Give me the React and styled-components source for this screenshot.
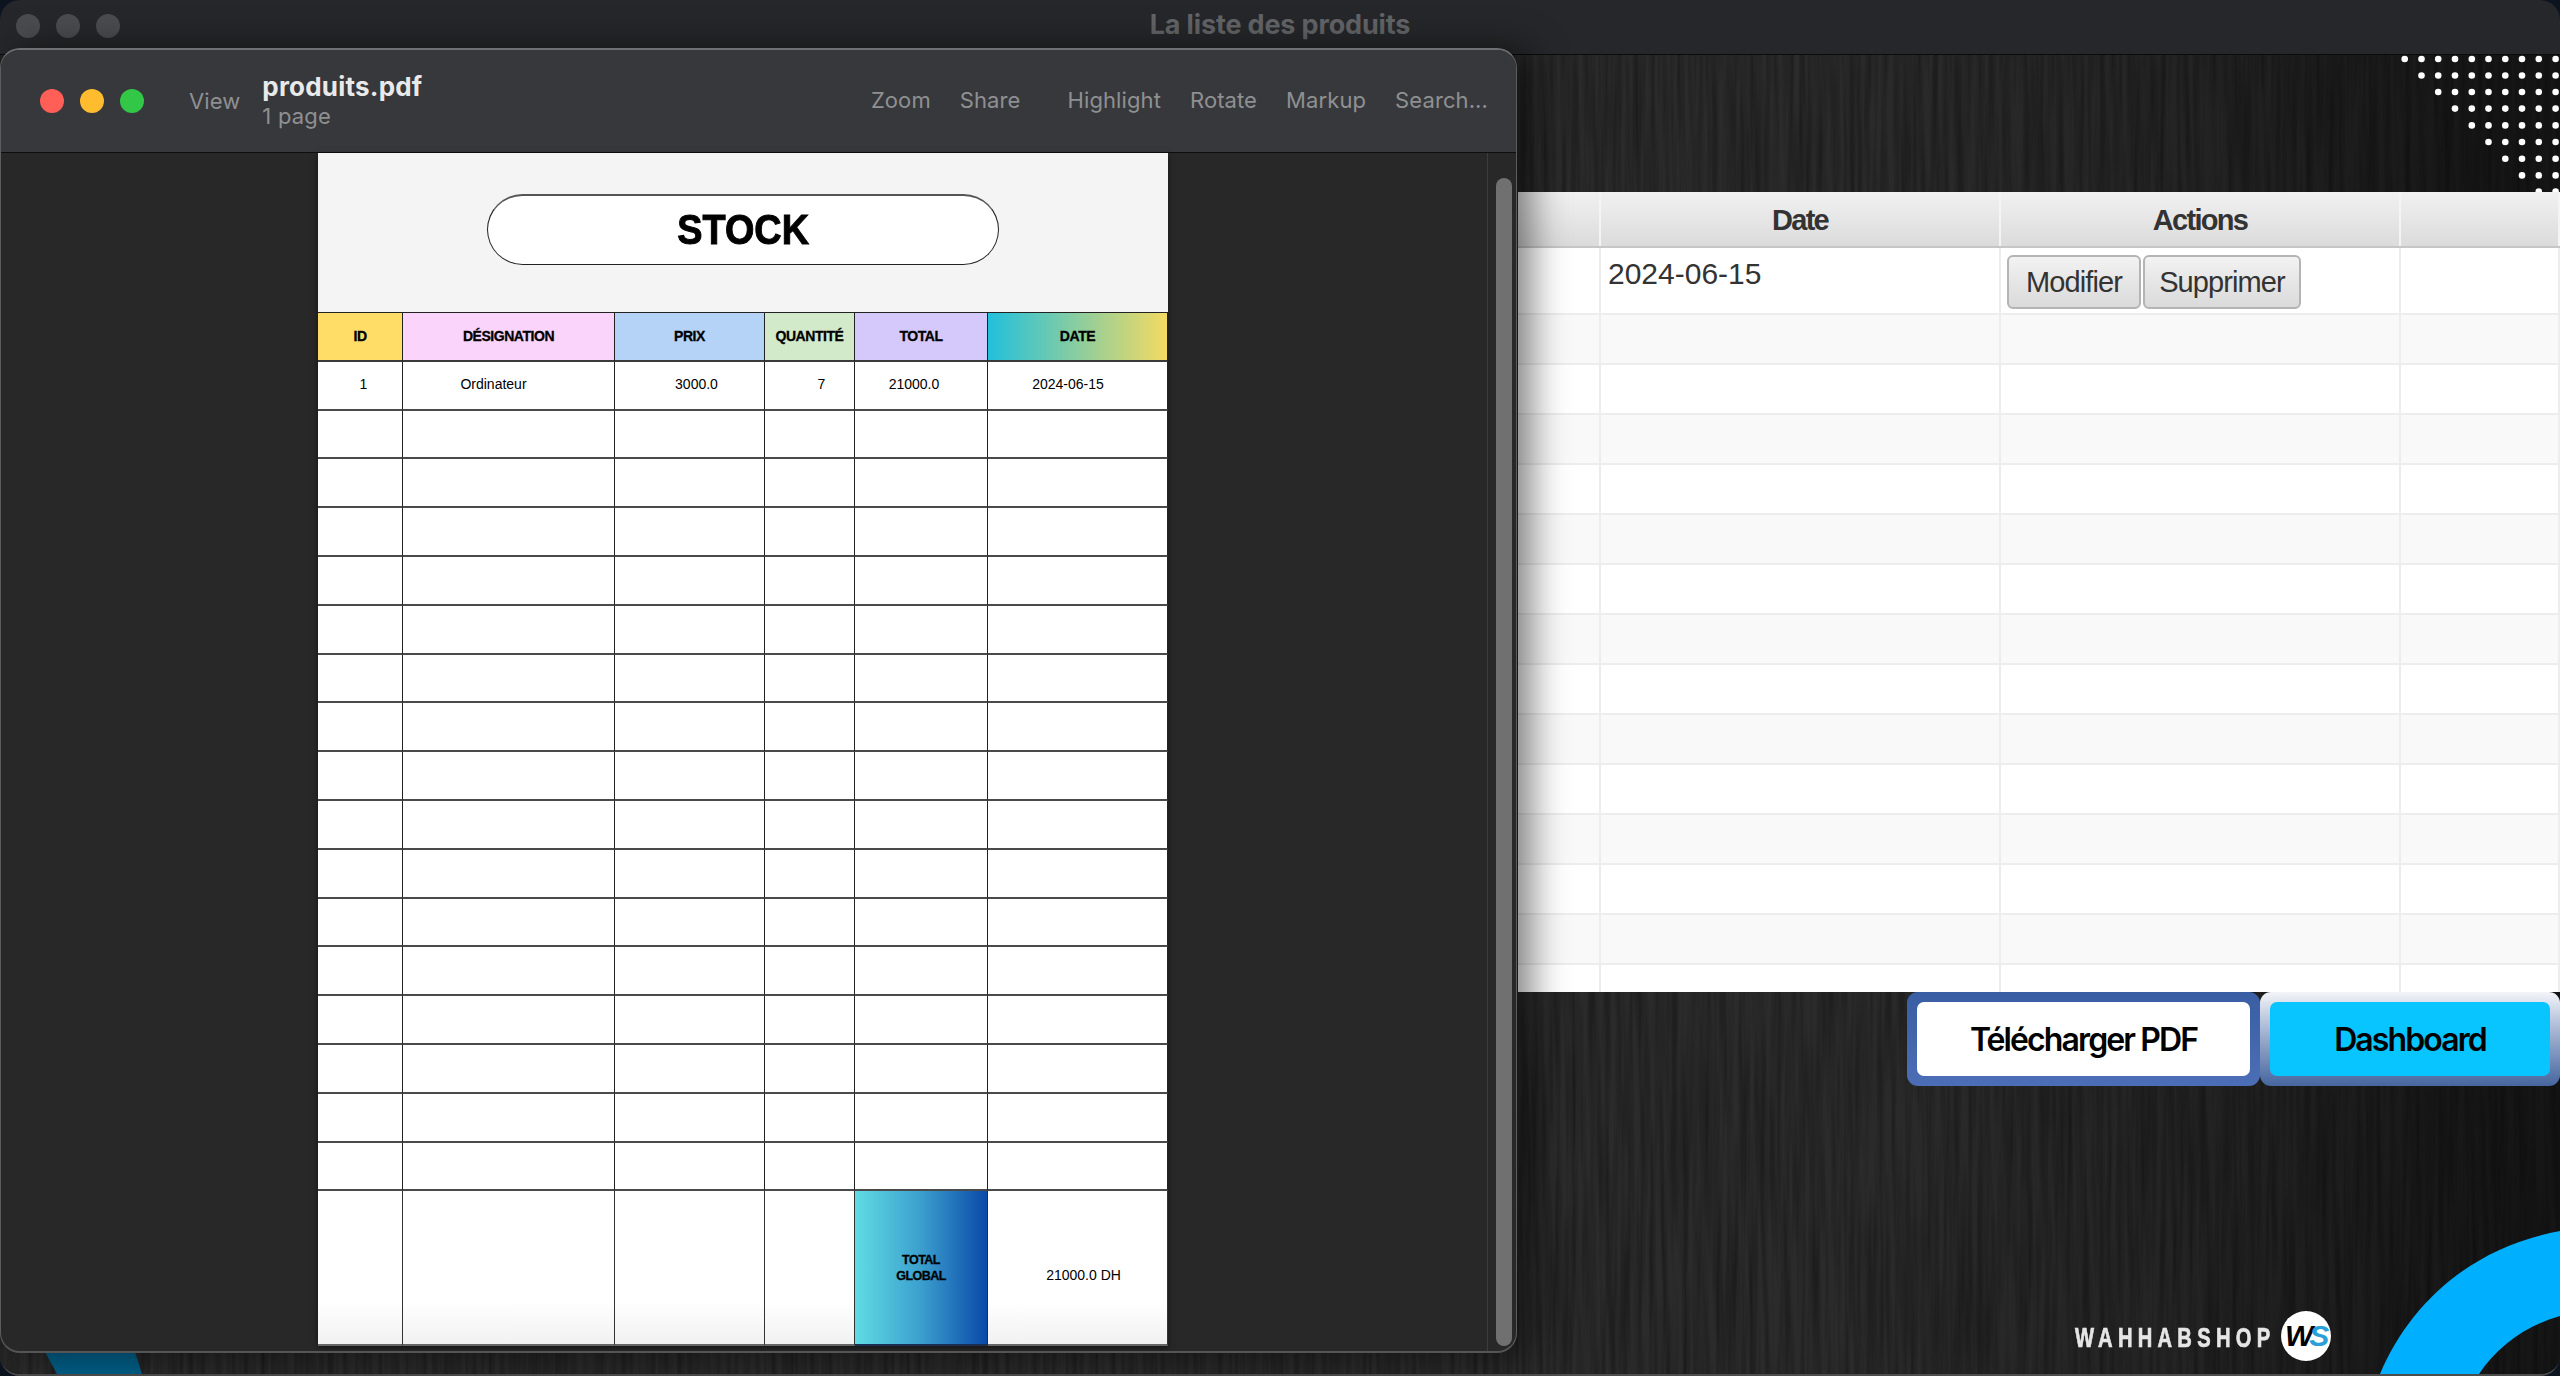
import React from "react";
import styled, { createGlobalStyle } from "styled-components";

const UI_FONT = '"Inter", "Liberation Sans", sans-serif';
const PDF_FONT = '"Liberation Sans", Arial, sans-serif';

const GlobalStyle = createGlobalStyle`
  html, body {
    margin: 0;
    padding: 0;
    background: #0c1420;
    font-family: ${UI_FONT};
  }
  * { box-sizing: border-box; }
`;

const Desktop = styled.div`
  position: relative;
  width: 2560px;
  height: 1376px;
  overflow: hidden;
`;

const BackWindow = styled.div`
  display: flex;
  flex-direction: column;
  width: 100%;
  height: 100%;
  border-radius: 20px;
  overflow: hidden;
  border-bottom: 2px solid #4d4d4d;
`;

const TitleBar = styled.header`
  position: relative;
  flex: 0 0 55px;
  display: flex;
  align-items: center;
  justify-content: center;
  padding-bottom: 6px;
  background: #26272a;
  border-bottom: 1px solid #0b0b0b;
`;

const GhostLights = styled.div`
  position: absolute;
  left: 16px;
  top: 14px;
  display: flex;
  gap: 16px;
`;

const GhostDot = styled.span`
  width: 24px;
  height: 24px;
  border-radius: 50%;
  background: #4b4c4f;
`;

const WindowTitle = styled.h1`
  margin: 0;
  font-size: 27px;
  font-weight: 700;
  letter-spacing: -0.15px;
  color: #636467;
`;

const Wood = styled.main`
  position: relative;
  flex: 1;
  min-height: 0;
  display: flex;
  flex-direction: column;
  padding: 137px 0 0 1518px;
  background: linear-gradient(90deg, #2b2b2b 0%, #2b2b2b 72%, #252525 84%, #161616 98%);
`;

const Grain = styled.svg`
  position: absolute;
  inset: 0;
  width: 100%;
  height: 100%;
`;

const Dots = styled.svg`
  position: absolute;
  top: 0;
  right: 0;
  width: 160px;
  height: 138px;
`;

const Arc = styled.svg`
  position: absolute;
  right: 0;
  bottom: 0;
  width: 182px;
  height: 143px;
`;

const Sliver = styled.svg`
  position: absolute;
  left: 40px;
  bottom: 0;
  width: 110px;
  height: 22px;
`;

const ProductTable = styled.section`
  position: relative;
  height: 800px;
  overflow: hidden;
  background: #fff;
  font-family: ${PDF_FONT};
`;

const TableHead = styled.div`
  display: grid;
  grid-template-columns: 83px 400px 400px 159px;
  height: 56px;
  background: linear-gradient(#f1f1f1, #dbdbdb);
  border-bottom: 2px solid #c6c6c6;
`;

const HeadCell = styled.div`
  display: flex;
  align-items: center;
  justify-content: center;
  padding-top: 2px;
  font-size: 29px;
  font-weight: 700;
  letter-spacing: -1.7px;
  color: #333;
  border-right: 2px solid #f4f4f4;
`;

const TableRow = styled.div`
  display: grid;
  grid-template-columns: 83px 400px 400px 159px;
  height: ${(p) => p.$height}px;
  background: ${(p) => (p.$striped ? "#f9f9f9" : "#fff")};
  border-bottom: 2px solid #ededed;
`;

const BodyCell = styled.div`
  display: flex;
  align-items: flex-start;
  gap: 2px;
  padding: ${(p) => (p.$actions ? "7px 0 0 6px" : "8px 0 0 7px")};
  font-size: 30px;
  line-height: 36px;
  color: #333;
  border-right: 2px solid #ededed;
`;

const RowButton = styled.button`
  height: 54px;
  width: ${(p) => p.$width}px;
  padding: 0;
  font-family: ${PDF_FONT};
  font-size: 29px;
  letter-spacing: -0.9px;
  color: #333;
  background: linear-gradient(#f2f2f2, #dadada);
  border: 2px solid #b4b4b4;
  border-radius: 6px;
`;

const ActionBar = styled.div`
  position: relative;
  display: flex;
  justify-content: flex-end;
`;

const BigButton = styled.button`
  height: 94px;
  width: ${(p) => p.$width}px;
  padding: 10px;
  border: 0;
  border-radius: 11px;
  background: linear-gradient(${(p) => p.$edge});
`;

const ButtonFace = styled.span`
  display: flex;
  align-items: center;
  justify-content: center;
  height: 100%;
  border-radius: 7px;
  font-family: ${UI_FONT};
  font-size: 32px;
  font-weight: 600;
  letter-spacing: -1.9px;
  color: #000;
  background: ${(p) => p.$fill};
`;

const Brand = styled.div`
  position: relative;
  display: flex;
  align-items: center;
  justify-content: flex-end;
  gap: 6px;
  margin-top: auto;
  padding: 0 229px 13px 0;
`;

const BrandName = styled.span`
  display: inline-block;
  padding-top: 4px;
  font-family: ${PDF_FONT};
  font-size: 28px;
  font-weight: 700;
  letter-spacing: 7.3px;
  color: #e6e6e6;
  transform: scaleX(0.72);
  transform-origin: right center;
  -webkit-text-stroke: 0.7px #e6e6e6;
`;

const BrandMark = styled.svg`
  width: 50px;
  height: 50px;
`;

const PdfWindow = styled.div`
  position: absolute;
  left: 0;
  top: 48px;
  width: 1517px;
  height: 1305px;
  display: flex;
  flex-direction: column;
  border-radius: 20px;
  overflow: hidden;
  background: #282828;
  border: 1px solid #5d5d5f;
  border-top: 2px solid #707072;
  border-bottom: 2px solid #555;
`;

const PdfShadow = styled.div`
  position: absolute;
  left: 0;
  top: 48px;
  width: 1517px;
  height: 1305px;
  border-radius: 20px;
  box-shadow: 14px 0 36px rgba(0, 0, 0, 0.5);
`;

const PdfToolbar = styled.div`
  flex: 0 0 103px;
  display: flex;
  align-items: center;
  padding: 0 28px 0 39px;
  background: #37383b;
  border-bottom: 1px solid #0e0e0e;
`;

const Lights = styled.div`
  display: flex;
  gap: 16px;
  margin-right: 45px;
`;

const Light = styled.span`
  width: 24px;
  height: 24px;
  border-radius: 50%;
  background: ${(p) => p.$color};
`;

const ToolLabel = styled.span`
  margin-left: ${(p) => p.$gap || 0}px;
  font-size: 22px;
  letter-spacing: 0.1px;
  line-height: 26px;
  color: #8f9092;
  white-space: nowrap;
`;

const DocInfo = styled.div`
  display: flex;
  flex-direction: column;
  margin-left: 22px;
`;

const DocName = styled.strong`
  font-size: 26px;
  line-height: 30px;
  font-weight: 700;
  letter-spacing: 0.2px;
  color: #e9e9e9;
`;

const DocMeta = styled.span`
  font-size: 22px;
  line-height: 28px;
  letter-spacing: 0.2px;
  color: #8f9092;
`;

const ToolGroup = styled.nav`
  display: flex;
  margin: 0 0 2px auto;
`;

const Viewer = styled.div`
  flex: 1;
  min-height: 0;
  display: flex;
`;

const Stage = styled.div`
  flex: 1;
  padding: 0 0 5px 317px;
`;

const ScrollTrack = styled.div`
  flex: 0 0 29px;
  padding: 25px 4px 5px 8px;
  border-left: 1px solid #3c3c3c;
`;

const ScrollThumb = styled.div`
  height: 100%;
  border-radius: 9px;
  background: #707070;
`;

const PdfPage = styled.article`
  width: 850px;
  height: 100%;
  display: flex;
  flex-direction: column;
  font-family: ${PDF_FONT};
  color: #000;
  box-shadow: 0 2px 6px rgba(0, 0, 0, 0.5);
`;

const PageHeader = styled.div`
  flex: 0 0 159px;
  display: flex;
  align-items: flex-start;
  justify-content: center;
  padding: 41px 0 0;
  background: #f4f4f4;
`;

const StockPill = styled.div`
  width: 512px;
  height: 71px;
  display: flex;
  align-items: center;
  justify-content: center;
  background: #fff;
  border: 1px solid #222;
  border-top: 2px solid #555;
  border-radius: 36px;
`;

const StockTitle = styled.span`
  display: inline-block;
  font-size: 42px;
  font-weight: 700;
  transform: scaleX(0.9);
  -webkit-text-stroke: 1px #000;
`;

const PdfGrid = styled.div`
  flex: 1;
  display: grid;
  grid-template-columns: 85px 212px 150px 90px 133px 180px;
  grid-template-rows: repeat(18, 48.8px) 1fr;
  border-top: 1px solid #222;
`;

const PdfHead = styled.div`
  display: flex;
  align-items: center;
  justify-content: center;
  padding-bottom: 1px;
  font-size: 14px;
  font-weight: 700;
  letter-spacing: -0.45px;
  -webkit-text-stroke: 0.3px #000;
  background: ${(p) => p.$bg};
  border-right: 1px solid #222;
  border-bottom: 2px solid #3a3a3a;
`;

const PdfCell = styled.div`
  display: flex;
  align-items: center;
  justify-content: center;
  padding: ${(p) => `0 ${p.$right || 0}px 3px ${p.$left || 0}px`};
  font-size: 14px;
  background: #fff;
  border-right: 1px solid #222;
  border-bottom: 2px solid #4a4a4a;
`;

const TotalCell = styled.div`
  display: flex;
  align-items: center;
  justify-content: center;
  padding: ${(p) => (p.$value ? "14px 0 0 12px" : "0")};
  font-size: 14px;
  background: linear-gradient(#fff 72%, #f1f1f1);
  border-right: 1px solid #333;
  border-bottom: 2px solid #666;
`;

const GlobalLabel = styled.div`
  text-align: center;
  font-size: 12.5px;
  line-height: 16px;
  font-weight: 700;
  letter-spacing: -0.55px;
  -webkit-text-stroke: 0.3px #000;
  background: linear-gradient(90deg, #60dce4, #3b9fce 50%, #0a49a8);
  border-right: 1px solid #12305e;
  border-bottom: 2px solid #1c2f50;
  display: flex;
  align-items: center;
  justify-content: center;
`;

const HEADS = [
  ["ID", "#ffdd66"],
  ["DÉSIGNATION", "#fad4fb"],
  ["PRIX", "#b5d2f7"],
  ["QUANTITÉ", "#d2eaca"],
  ["TOTAL", "#d5c8fb"],
  ["DATE", "linear-gradient(90deg, #22c0dc, #f3da62)"],
];

const DOT_X = [4.7, 21.5, 38.2, 55, 71.8, 88.5, 105.3, 122, 138.8, 155.6];
const DOT_Y = [4, 20.5, 37, 53.6, 70.4, 87, 103.7, 120.4, 136.5];

export default function App() {
  return (
    <>
      <GlobalStyle />
      <Desktop>
        <BackWindow>
          <TitleBar>
            <GhostLights>
              <GhostDot />
              <GhostDot />
              <GhostDot />
            </GhostLights>
            <WindowTitle>La liste des produits</WindowTitle>
          </TitleBar>
          <Wood>
            <Grain aria-hidden="true">
              <filter id="grain" x="0" y="0" width="100%" height="100%">
                <feTurbulence type="fractalNoise" baseFrequency="0.18 0.006" numOctaves="3" seed="7" />
                <feColorMatrix values="0 0 0 0 0  0 0 0 0 0  0 0 0 0 0  0.65 0 0 0 -0.2" />
              </filter>
              <rect width="100%" height="100%" filter="url(#grain)" />
            </Grain>
            <Sliver viewBox="0 0 110 22" aria-hidden="true">
              <path d="M5 0 L95 0 L102 22 L17 22 Z" fill="#005d85" />
            </Sliver>
            <Dots viewBox="0 0 160 138" aria-hidden="true">
              {DOT_Y.map((y, row) =>
                DOT_X.slice(row).map((x) => <circle key={`${row}-${x}`} cx={x} cy={y} r="3.3" fill="#fff" />)
              )}
            </Dots>
            <Arc viewBox="0 0 182 143" aria-hidden="true">
              <path d="M2 143 C32 72 94 16 182 0 L182 85 C147 95 120 115 101 143 Z" fill="#00b0ff" />
            </Arc>
            <ProductTable>
              <TableHead>
                <HeadCell />
                <HeadCell>Date</HeadCell>
                <HeadCell>Actions</HeadCell>
                <HeadCell />
              </TableHead>
              <TableRow $height={67}>
                <BodyCell />
                <BodyCell>2024-06-15</BodyCell>
                <BodyCell $actions>
                  <RowButton $width={134}>Modifier</RowButton>
                  <RowButton $width={158}>Supprimer</RowButton>
                </BodyCell>
                <BodyCell />
              </TableRow>
              {Array.from({ length: 14 }, (_, i) => (
                <TableRow key={i} $height={50} $striped={i % 2 === 0}>
                  <BodyCell />
                  <BodyCell />
                  <BodyCell />
                  <BodyCell />
                </TableRow>
              ))}
            </ProductTable>
            <ActionBar>
              <BigButton $width={353} $edge="#395ea3, #4c6eb6">
                <ButtonFace $fill="#fff">Télécharger PDF</ButtonFace>
              </BigButton>
              <BigButton $width={300} $edge="#f2f4f8, #9fb0d0 45%, #46669f">
                <ButtonFace $fill="#08c4ff">Dashboard</ButtonFace>
              </BigButton>
            </ActionBar>
            <Brand>
              <BrandName>WAHHABSHOP</BrandName>
              <BrandMark viewBox="0 0 50 50">
                <circle cx="25" cy="25" r="25" fill="#fff" />
                <text x="4" y="35" fontFamily={PDF_FONT} fontSize="30" fontWeight="700" fontStyle="italic" fill="#000" letterSpacing="-4">
                  W<tspan fill="#2a9fd8">S</tspan>
                </text>
              </BrandMark>
            </Brand>
          </Wood>
        </BackWindow>

        <PdfShadow />
        <PdfWindow>
          <PdfToolbar>
            <Lights>
              <Light $color="#ff5f57" />
              <Light $color="#febc2e" />
              <Light $color="#33c748" />
            </Lights>
            <ToolLabel>View</ToolLabel>
            <DocInfo>
              <DocName>produits.pdf</DocName>
              <DocMeta>1 page</DocMeta>
            </DocInfo>
            <ToolGroup>
              <ToolLabel>Zoom</ToolLabel>
              <ToolLabel $gap={29}>Share</ToolLabel>
              <ToolLabel $gap={47}>Highlight</ToolLabel>
              <ToolLabel $gap={29}>Rotate</ToolLabel>
              <ToolLabel $gap={29}>Markup</ToolLabel>
              <ToolLabel $gap={29}>Search...</ToolLabel>
            </ToolGroup>
          </PdfToolbar>
          <Viewer>
            <Stage>
              <PdfPage>
                <PageHeader>
                  <StockPill>
                    <StockTitle>STOCK</StockTitle>
                  </StockPill>
                </PageHeader>
                <PdfGrid>
                  {HEADS.map(([label, bg]) => (
                    <PdfHead key={label} $bg={bg}>
                      {label}
                    </PdfHead>
                  ))}
                  <PdfCell $left={7}>1</PdfCell>
                  <PdfCell $right={30}>Ordinateur</PdfCell>
                  <PdfCell $left={14}>3000.0</PdfCell>
                  <PdfCell $left={24}>7</PdfCell>
                  <PdfCell $right={14}>21000.0</PdfCell>
                  <PdfCell $right={19}>2024-06-15</PdfCell>
                  {Array.from({ length: 96 }, (_, i) => (
                    <PdfCell key={i} />
                  ))}
                  <TotalCell />
                  <TotalCell />
                  <TotalCell />
                  <TotalCell />
                  <GlobalLabel>
                    TOTAL
                    <br />
                    GLOBAL
                  </GlobalLabel>
                  <TotalCell $value>21000.0 DH</TotalCell>
                </PdfGrid>
              </PdfPage>
            </Stage>
            <ScrollTrack>
              <ScrollThumb />
            </ScrollTrack>
          </Viewer>
        </PdfWindow>
      </Desktop>
    </>
  );
}
